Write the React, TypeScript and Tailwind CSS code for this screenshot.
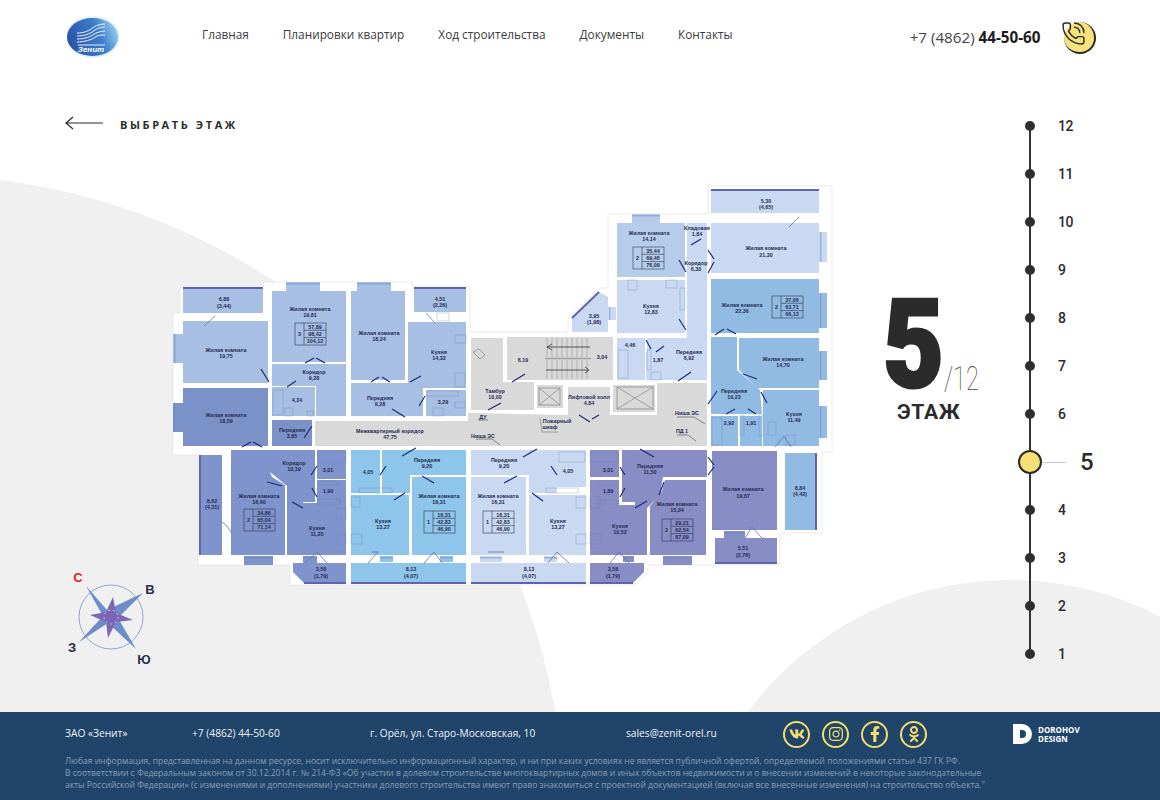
import { PhoneCall } from 'lucide-react';
import { FaVk, FaInstagram, FaFacebookF, FaOdnoklassniki } from 'react-icons/fa';

const TOP = '#a7bfe3';
const DEEP = '#7b92c8';
const LOW = '#7f94cc';
const SKY = '#8ec5ea';
const PALE = '#c9d9f1';
const MID = '#b5cdeb';
const PURPLE = '#898dc6';
const BLUE = '#92bbe4';
const GRAY = '#d9d9d9';

const rooms: [string, string][] = [
  // upper left flat
  [TOP, '183,288 263,288 263,313 183,313'],
  [TOP, '183,321 268,321 268,383 183,383'],
  [TOP, '272,291 346,291 346,362 272,362'],
  [TOP, '351,291 405,291 405,380 351,380'],
  [TOP, '408,322 466,322 466,388 408,388'],
  [TOP, '414,288 466,288 466,312 414,312'],
  [TOP, '272,364 346,364 346,416 316,416 316,386 272,386'],
  [TOP, '351,383 423,383 423,416 351,416'],
  [TOP, '272,387 315,387 315,416 272,416'],
  [TOP, '426,390 466,390 466,416 426,416'],
  // left flat
  [DEEP, '183,388 268,388 268,446 183,446'],
  [DEEP, '272,420 312,420 312,446 272,446'],
  // gray core
  [GRAY, '471,338 503,338 503,410 471,410'],
  [GRAY, '507,337 613,337 613,380 507,380'],
  [GRAY, '480,382 534,382 534,410 480,410'],
  [GRAY, '315,421 468,421 468,413 568,415 568,387 610,387 610,415 657,415 657,383 707,383 707,446 315,446'],
  [GRAY, '537,385 563,385 563,408 537,408'],
  [GRAY, '613,385 655,385 655,412 613,412'],
  // upper right flat
  [PALE, '711,189 819,189 819,213 711,213'],
  [PALE, '711,223 819,223 819,273 711,273'],
  [MID, '617,223 685,223 685,277 617,277'],
  [PALE, '687,223 707,223 707,380 647,380 647,338 687,338'],
  [PALE, '617,280 685,280 685,333 617,333'],
  [PALE, '572,318 599,292 608,297 608,332 572,332'],
  [PALE, '617,338 645,338 645,380 617,380'],
  [PALE, '646,352 669,352 669,380 646,380'],
  // right flat
  [BLUE, '711,279 819,279 819,333 711,333'],
  [BLUE, '711,337 737,337 737,370 760,390 762,414 711,414'],
  [BLUE, '739,338 819,338 819,388 757,388 739,370'],
  [BLUE, '763,390 819,390 819,446 763,446'],
  [BLUE, '711,416 738,416 738,446 711,446'],
  [BLUE, '740,416 762,416 762,446 740,446'],
  // lower left flat
  [LOW, '200,455 222,455 222,555 200,555'],
  [LOW, '231,472 270,472 272,477 285,485 285,555 231,555'],
  [LOW, '231,450 315,450 315,502 303,502 303,508 287,508 287,486 270,472 231,472'],
  [LOW, '287,503 346,503 346,555 287,555'],
  [LOW, '317,450 346,450 346,479 317,479'],
  [LOW, '317,480 346,480 346,505 317,505'],
  [LOW, '293,563 346,563 346,583 304,583 293,572'],
  // sky flat
  [SKY, '351,450 380,450 380,493 351,493'],
  [SKY, '382,450 466,450 466,475 410,475 410,493 382,493'],
  [SKY, '412,477 466,477 466,555 412,555'],
  [SKY, '351,495 409,495 409,555 351,555'],
  [SKY, '351,563 466,563 466,583 351,583'],
  // pale flat
  [PALE, '471,450 557,450 557,493 529,493 529,475 471,475'],
  [PALE, '471,477 526,477 526,555 471,555'],
  [PALE, '529,495 586,495 586,555 529,555'],
  [PALE, '557,450 586,450 586,487 557,487'],
  [PALE, '471,563 586,563 586,583 471,583'],
  // purple flat
  [PURPLE, '590,450 619,450 619,477 590,477'],
  [PURPLE, '590,480 619,480 619,505 590,505'],
  [PURPLE, '590,505 647,505 647,555 590,555'],
  [PURPLE, '622,450 707,450 707,477 663,477 660,495 647,508 635,508 635,502 622,502'],
  [PURPLE, '650,506 662,491 665,480 706,480 706,555 650,555'],
  [PURPLE, '712,451 777,451 777,530 712,530'],
  [PURPLE, '715,538 777,538 777,563 715,563'],
  [PURPLE, '590,563 644,563 644,572 633,583 590,583'],
  [BLUE, '785,453 816,453 816,530 785,530'],
];

const windows: [string, number, number, number, number][] = [
  [TOP, 286, 282, 34, 9],
  [TOP, 357, 282, 34, 9],
  [TOP, 173, 334, 10, 29],
  [DEEP, 173, 403, 10, 29],
  [MID, 632, 214, 28, 9],
  [PALE, 819, 232, 8, 30],
  [BLUE, 819, 293, 8, 35],
  [BLUE, 819, 351, 8, 29],
  [BLUE, 819, 406, 8, 32],
  [LOW, 244, 556, 29, 9],
  [LOW, 303, 556, 14, 7],
  [SKY, 380, 556, 13, 6],
  [SKY, 440, 556, 13, 6],
  [PALE, 480, 556, 22, 6],
  [PALE, 544, 556, 13, 6],
  [PURPLE, 623, 556, 11, 6],
  [PURPLE, 663, 556, 29, 9],
  [PURPLE, 724, 531, 21, 7],
  [PALE, 608, 307, 8, 13],
];

// rim on the outer edge of each balcony
const rims: [number, number, number, number][] = [
  [183, 288, 263, 288],
  [414, 288, 466, 288],
  [711, 190, 819, 190],
  [572, 318, 599, 292],
  [200, 455, 200, 555],
  [304, 583, 346, 583],
  [351, 583, 466, 583],
  [471, 583, 586, 583],
  [590, 583, 633, 583],
  [715, 563, 777, 563],
  [816, 453, 816, 530],
];

const doors: number[][] = [
  [261, 369, 269, 382], [305, 363, 314, 358], [316, 358, 325, 363], [287, 387, 296, 381],
  [371, 382, 379, 377], [382, 377, 390, 382], [410, 382, 421, 376], [419, 406, 425, 396],
  [392, 409, 405, 417], [242, 447, 251, 442], [253, 442, 262, 447], [304, 438, 312, 426],
  [488, 410, 501, 403], [512, 382, 525, 374], [579, 415, 590, 422], [592, 419, 599, 415],
  [679, 260, 686, 272], [691, 245, 701, 239], [708, 250, 714, 259], [714, 262, 708, 273],
  [679, 319, 686, 330], [646, 340, 651, 349], [656, 352, 664, 346], [678, 381, 691, 372],
  [715, 335, 724, 329], [727, 329, 736, 334], [743, 374, 757, 379], [761, 392, 767, 403],
  [708, 404, 717, 391], [726, 414, 735, 409], [748, 409, 756, 414], [402, 456, 416, 448],
  [311, 475, 317, 466], [267, 482, 282, 486], [312, 488, 317, 497], [292, 502, 303, 508],
  [380, 475, 386, 466], [422, 476, 434, 483], [394, 500, 405, 493], [523, 457, 537, 449],
  [504, 483, 517, 476], [532, 493, 543, 501], [551, 466, 557, 475], [620, 467, 625, 475],
  [625, 488, 620, 497], [635, 508, 647, 501], [640, 449, 654, 457], [664, 482, 659, 495],
  [708, 457, 714, 465], [714, 467, 708, 475],
];

// balcony doors, drawn lighter
const softDoors = [
  '204,326 215,316', '426,313 435,323', '789,227 799,217', '368,563 378,552 372,552',
  '424,563 434,552 442,563', '488,552 504,552', '305,563 317,552 327,563',
  '548,563 557,552 569,563', '610,563 619,552 629,563', '745,538 752,527 762,538',
  '222,522 226,525 232,533', '775,447 784,436 791,447',
];

const fixtures: number[][] = [
  [273, 390, 10, 25], [455, 335, 11, 8], [455, 373, 10, 14], [628, 280, 9, 10], [666, 280, 11, 8],
  [680, 288, 5, 22], [647, 350, 4, 20], [740, 415, 4, 20], [759, 415, 4, 21], [618, 350, 10, 28],
  [712, 418, 10, 27], [768, 422, 8, 13], [786, 435, 9, 10], [318, 452, 28, 10], [319, 481, 19, 4],
  [317, 499, 23, 6], [336, 508, 10, 11], [336, 534, 10, 10], [351, 534, 11, 10], [351, 497, 9, 10],
  [576, 497, 10, 11], [576, 534, 10, 10], [590, 534, 11, 10], [590, 497, 10, 11], [598, 481, 20, 4],
  [597, 500, 21, 4], [559, 452, 26, 10], [590, 452, 28, 10], [427, 391, 31, 5], [437, 313, 12, 8],
  [455, 402, 10, 6], [285, 408, 8, 8], [433, 408, 10, 8], [307, 411, 6, 5], [359, 488, 33, 5],
  [546, 488, 32, 5], [651, 372, 10, 8],
];

const labels: [number, number, string][] = [
  [224, 299, '6,88'], [224, 306, '(3,44)'], [310, 309, 'Жилая комната'], [310, 315, '19,81'],
  [379, 333, 'Жилая комната'], [379, 339, '18,24'], [440, 299, '4,51'], [440, 305, '(2,26)'],
  [439, 352, 'Кухня'], [439, 358, '14,32'], [314, 372, 'Коридор'], [314, 378, '9,28'],
  [297, 400, '4,34'], [380, 398, 'Передняя'], [380, 404, '9,28'], [443, 402, '3,29'],
  [226, 350, 'Жилая комната'], [226, 356, '19,75'], [226, 415, 'Жилая комната'], [226, 421, '18,59'],
  [292, 430, 'Передняя'], [292, 436, '3,85'], [390, 431, 'Межквартирный коридор'], [390, 437, '47,75'],
  [495, 391, 'Тамбур'], [495, 397, '10,00'], [523, 360, '6,19'], [602, 357, '3,04'],
  [589, 397, 'Лифтовой холл'], [589, 403, '4,84'], [557, 421, 'Пожарный'], [550, 427, 'шкаф'],
  [687, 413, 'Ниша ЭС'], [682, 431, 'ПД 1'], [483, 436, 'Ниша ЭС'], [483, 417, 'ДУ'],
  [594, 316, '3,95'], [594, 322, '(1,98)'], [649, 233, 'Жилая комната'], [649, 239, '14,14'],
  [697, 228, 'Кладовая'], [697, 234, '1,84'], [696, 263, 'Коридор'], [696, 269, '6,30'],
  [651, 306, 'Кухня'], [651, 312, '12,83'], [630, 345, '4,46'], [658, 360, '1,87'],
  [689, 352, 'Передняя'], [689, 358, '6,92'], [766, 201, '5,30'], [766, 207, '(4,65)'],
  [766, 248, 'Жилая комната'], [766, 255, '21,30'], [742, 305, 'Жилая комната'], [742, 311, '22,36'],
  [783, 359, 'Жилая комната'], [783, 365, '14,70'], [734, 391, 'Передняя'], [734, 397, '19,23'],
  [794, 414, 'Кухня'], [794, 420, '11,49'], [729, 423, '2,92'], [751, 423, '1,91'],
  [294, 463, 'Коридор'], [294, 469, '10,19'], [328, 470, '3,01'], [328, 491, '1,90'],
  [259, 496, 'Жилая комната'], [259, 502, '16,60'], [317, 528, 'Кухня'], [317, 534, '11,20'],
  [212, 501, '8,62'], [212, 507, '(4,31)'], [321, 569, '3,58'], [321, 576, '(1,79)'],
  [368, 472, '4,05'], [427, 460, 'Передняя'], [427, 466, '9,20'], [439, 496, 'Жилая комната'],
  [439, 502, '16,31'], [383, 521, 'Кухня'], [383, 527, '13,27'], [411, 569, '8,13'], [411, 576, '(4,07)'],
  [504, 460, 'Передняя'], [504, 466, '9,20'], [498, 496, 'Жилая комната'], [498, 502, '16,31'],
  [558, 521, 'Кухня'], [558, 527, '13,27'], [568, 471, '4,05'], [608, 470, '3,01'], [608, 491, '1,89'],
  [650, 466, 'Передняя'], [650, 472, '11,50'], [620, 526, 'Кухня'], [620, 532, '10,52'],
  [677, 504, 'Жилая комната'], [677, 510, '15,34'], [743, 489, 'Жилая комната'], [743, 496, '19,87'],
  [743, 548, '5,51'], [743, 555, '(2,76)'], [800, 488, '8,84'], [800, 494, '(4,42)'],
  [529, 569, '8,13'], [529, 576, '(4,07)'], [613, 569, '3,58'], [613, 576, '(1,79)'],
];

const tables: [number, number, string, string[]][] = [
  [295, 323, '3', ['57,89', '98,42', '104,12']],
  [633, 247, '2', ['35,44', '69,46', '76,09']],
  [772, 296, '2', ['37,06', '63,71', '66,13']],
  [244, 509, '2', ['34,86', '65,04', '71,14']],
  [424, 511, '1', ['16,31', '42,83', '46,90']],
  [483, 511, '1', ['16,31', '42,83', '46,90']],
  [662, 519, '2', ['29,21', '62,54', '67,09']],
];

const OUTLINE =
  '180,287 263,287 263,282 412,282 412,287 470,287 470,332 568,332 568,318 600,288 608,288 608,214 708,214 708,186 832,186 832,452 822,452 822,533 780,533 780,565 648,565 648,572 635,585 290,585 290,565 198,565 198,455 173,455 173,313 180,313';

function FloorPlan() {
  const steps = Array.from({ length: 9 }, (_, i) => 547 + i * 5);
  return (
    <svg
      viewBox="160 180 680 420"
      className="w-[680px] h-[420px] shrink-0 font-['Liberation_Sans',sans-serif]"
    >
      <polygon points={OUTLINE} fill="#ffffff" stroke="#e4e4e4" strokeWidth="0.8" />
      {windows.map(([c, x, y, w, h], i) => (
        <g key={i}>
          <rect x={x} y={y} width={w} height={h} fill={c} />
          {w > h ? (
            <rect x={x} y={y + 1} width={w} height={1.5} fill="#6f86bb" opacity="0.45" />
          ) : (
            <rect x={x + 1} y={y} width={1.5} height={h} fill="#6f86bb" opacity="0.45" />
          )}
        </g>
      ))}
      {rooms.map(([c, p], i) => (
        <polygon key={i} points={p} fill={c} />
      ))}
      {rims.map(([a, b, c, d], i) => (
        <line key={i} x1={a} y1={b} x2={c} y2={d} stroke="#5f62ad" strokeWidth="2" />
      ))}
      {fixtures.map(([x, y, w, h], i) => (
        <rect key={i} x={x} y={y} width={w} height={h} fill="none" stroke="#5d76ad" strokeWidth="0.5" opacity="0.6" />
      ))}

      {steps.map((x) => (
        <g key={x} stroke="#8b8b8b" strokeWidth="0.5">
          <line x1={x} y1={338} x2={x} y2={357} />
          <line x1={x} y1={360} x2={x} y2={379} />
        </g>
      ))}
      <line x1={545} y1={358.5} x2={591} y2={358.5} stroke="#a0a0a0" strokeWidth="1.5" />
      <path d="M548 347H590M552 344l-5 3 5 3M546 370H588M585 367l4 3-4 3" fill="none" stroke="#333333" strokeWidth="0.8" />
      <g fill="none" stroke="#777777" strokeWidth="0.6">
        <rect x="539" y="388" width="21" height="17" />
        <path d="M539 388l21 17M560 388l-21 17" />
        <rect x="617" y="387" width="36" height="22" />
        <path d="M617 387l36 22M653 387l-36 22" />
        <path d="M473 352l6-3 6 6-5 4-7-7z" />
        <path d="M540 418l2 14h16" />
        <path d="M677 417h17l11 7M677 435h11l8 6M476 439h16l8 6M478 420h10" stroke="#444444" />
      </g>

      {doors.map(([a, b, c, d], i) => (
        <line key={i} x1={a} y1={b} x2={c} y2={d} stroke="#1c2a78" strokeWidth="1.2" />
      ))}
      {softDoors.map((p, i) => (
        <polyline key={i} points={p} fill="none" stroke="#5e74a8" strokeWidth="0.8" />
      ))}

      {tables.map(([x, y, n, vals], i) => (
        <g key={i} fill="none" stroke="#30364f" strokeWidth="0.6">
          <rect x={x} y={y} width={31} height={22} />
          <line x1={x + 9} y1={y} x2={x + 9} y2={y + 22} />
          <line x1={x + 9} y1={y + 7.3} x2={x + 31} y2={y + 7.3} />
          <line x1={x + 9} y1={y + 14.6} x2={x + 31} y2={y + 14.6} />
          <text x={x + 4.5} y={y + 13} textAnchor="middle" fontSize="5.4" fontWeight="700" fill="#252a52" stroke="none">
            {n}
          </text>
          {vals.map((v, j) => (
            <text key={v} x={x + 20} y={y + 5.6 + j * 7.3} textAnchor="middle" fontSize="5.4" fontWeight="700" fill="#252a52" stroke="none">
              {v}
            </text>
          ))}
        </g>
      ))}
      {labels.map(([x, y, t], i) => (
        <text key={i} x={x} y={y + 2} textAnchor="middle" fontSize="5.4" fontWeight="700" fill="#252a52">
          {t}
        </text>
      ))}
    </svg>
  );
}

function Compass() {
  return (
    <svg viewBox="62 568 96 102" className="w-[96px] h-[102px] ml-[62px] mt-[388px] font-['Liberation_Sans',sans-serif]">
      <circle cx="111" cy="617" r="32" fill="none" stroke="#8ea6d2" strokeWidth="1" />
      <polygon points="86,586 107,610 143,593 118,618 136,649 108,623 79,642 103,616" fill="#6d8cca" />
      <polygon points="113,597 116,613 133,620 116,622 108,638 106,622 90,615 106,612" fill="#7c68b4" />
      <circle cx="111" cy="617" r="5" fill="#7d62b5" />
      <circle cx="111" cy="617" r="7" fill="none" stroke="#d6dcf0" strokeWidth="1" strokeDasharray="1.5 3.5" />
      <g fontSize="13" fontWeight="700" textAnchor="middle" fill="#2b2d4f">
        <text x="78" y="582" fill="#d9262c">С</text>
        <text x="150" y="594">В</text>
        <text x="72" y="652">З</text>
        <text x="144" y="664">Ю</text>
      </g>
    </svg>
  );
}

function Logo() {
  return (
    <svg viewBox="0 0 54 42" className="w-[54px] h-[42px] font-['Liberation_Sans',sans-serif]">
      <defs>
        <linearGradient id="lg" x1="0" x2="1" y1="0.5" y2="0.2">
          <stop offset="0" stopColor="#2a55a8" />
          <stop offset="0.6" stopColor="#3f7ecb" />
          <stop offset="1" stopColor="#9fd8f2" />
        </linearGradient>
      </defs>
      <ellipse cx="27" cy="21" rx="26.5" ry="20.5" fill="#d4ecf8" />
      <ellipse cx="26.5" cy="21" rx="25.5" ry="19" fill="url(#lg)" />
      <path d="M11 17c7 0 12-2 17-6 3-2 7-3 11-3M11 20c7 0 13-2 18-6 3-2 7-3 10-3M11 23c7 0 14-2 19-6 3-1 6-2 9-2M11 26c7 0 15-2 20-6 3-1 5-1 8-1M12 29h27" fill="none" stroke="#ffffff" strokeWidth="1" opacity="0.9" />
      <text x="25" y="35.5" textAnchor="middle" fontSize="8" fontWeight="700" fontStyle="italic" fill="#ffffff">Зенит</text>
    </svg>
  );
}

function Header() {
  const nav = ['Главная', 'Планировки квартир', 'Ход строительства', 'Документы', 'Контакты'];
  return (
    <header className="flex h-[72px] pl-[66px] font-['Open_Sans',sans-serif]">
      <a href="#" className="mt-[16px] w-[54px]">
        <Logo />
      </a>
      <nav className="ml-[82px] mt-[25px] flex gap-[34px] text-[11.8px] leading-[18px] text-[#3c3c3c]">
        {nav.map((n) => (
          <a key={n} href="#">{n}</a>
        ))}
      </nav>
      <div className="ml-[177px] mt-[27px] text-[15.2px] leading-[20px] text-[#444444] whitespace-nowrap">
        +7 (4862) <b className="font-bold text-[#1c1c1c]">44-50-60</b>
      </div>
      <div className="relative ml-[24px] mt-[22px] h-[32px] w-[32px] rounded-full bg-[#f8e27c] border-r-2 border-b-2 border-[#2b2b2b]">
        <PhoneCall size={25} strokeWidth={1.4} className="absolute -left-[3px] -top-[1px] text-[#2b2b2b]" />
      </div>
    </header>
  );
}

function FloorRail() {
  const floors = [12, 11, 10, 9, 8, 7, 6, 5, 4, 3, 2, 1];
  return (
    <div className="relative mt-[30px] h-[576px] w-[90px] font-['Roboto',sans-serif]">
      <div className="absolute left-[11px] top-[24px] bottom-[24px] w-[2px] bg-[#333333]" />
      {floors.map((f) =>
        f === 5 ? (
          <div key={f} className="relative flex h-[48px] items-center">
            <span className="h-[24px] w-[24px] rounded-full border-2 border-[#2b2b2b] bg-[#f6df74]" />
            <span className="h-px w-[24px] bg-[#c9c9c9]" />
            <span className="ml-[14px] text-[24px] font-medium text-[#2b2b2b]">{f}</span>
          </div>
        ) : (
          <div key={f} className="relative flex h-[48px] items-center">
            <span className="ml-[7px] h-[10px] w-[10px] rounded-full bg-[#2f2f2f]" />
            <span className="ml-[23px] text-[14px] font-medium tracking-[-0.04em] text-[#2b2b2b]">{f}</span>
          </div>
        ),
      )}
    </div>
  );
}

function SocialIcons() {
  const icons = [FaVk, FaInstagram, FaFacebookF, FaOdnoklassniki];
  return (
    <div className="flex gap-[12px] text-[#f3dd6c]">
      {icons.map((Icon, i) => (
        <a key={i} href="#" className="flex h-[27px] w-[27px] items-center justify-center rounded-full border-2 border-[#f3dd6c]">
          <Icon size={16} />
        </a>
      ))}
    </div>
  );
}

function Footer() {
  return (
    <footer className="h-[88px] bg-[#20446a] pl-[65px] pt-[9px] font-['Open_Sans',sans-serif]">
      <div className="flex h-[26px] items-center text-[10.2px] text-[#eef2f6]">
        <span className="w-[127px]">ЗАО «Зенит»</span>
        <span className="w-[178px]">+7 (4862) 44-50-60</span>
        <span className="w-[256px]">г. Орёл, ул. Старо-Московская, 10</span>
        <span className="w-[157px]">sales@zenit-orel.ru</span>
        <SocialIcons />
        <div className="ml-[86px] flex items-center gap-[5px]">
          <svg viewBox="0 0 20 20" className="h-[20px] w-[20px]">
            <path fillRule="evenodd" d="M0 0h9a10 10 0 0 1 0 20H0zM7 6v8h2a4 4 0 0 0 0-8z" fill="#ffffff" />
          </svg>
          <span className="text-[8px] font-bold leading-[9px] text-white">
            DOROHOV<br />DESIGN
          </span>
        </div>
      </div>
      <p className="mt-[8px] whitespace-nowrap text-[8.5px] leading-[12px] text-[#8b9fb5]">
        Любая информация, представленная на данном ресурсе, носит исключительно информационный характер, и ни при каких условиях не является публичной офертой, определяемой положениями статьи 437 ГК РФ.
        <br />
        В соответствии с Федеральным законом от 30.12.2014 г. № 214-ФЗ «Об участии в долевом строительстве многоквартирных домов и иных объектов недвижимости и о внесении изменений в некоторые законодательные
        <br />
        акты Российской Федерации» (с изменениями и дополнениями) участники долевого строительства имеют право знакомиться с проектной документацией (включая все внесенные изменения) на строительство объекта."
      </p>
    </footer>
  );
}

export default function App() {
  return (
    <div className="w-[1160px] bg-white">
      <main className="relative h-[712px] overflow-hidden">
        {/* background blobs */}
        <div className="absolute left-[-724px] top-[175px] h-[1288px] w-[1288px] rounded-full bg-[#f0f0f0]" />
        <div className="absolute left-[684px] top-[580px] h-[652px] w-[652px] rounded-full bg-[#f0f0f0]" />

        <div className="relative">
          <Header />
          <div className="flex">
            <div className="w-[840px]">
              <a href="#" className="ml-[65px] flex h-[108px] items-start pt-[44px] font-['Open_Sans',sans-serif]">
                <svg viewBox="0 0 38 14" className="h-[14px] w-[38px]">
                  <path d="M38 7H1M8 1L1 7l7 6" fill="none" stroke="#2b2b2b" strokeWidth="1.2" />
                </svg>
                <span className="ml-[17px] text-[11px] font-bold leading-[18px] tracking-[0.235em] text-[#2b2b2b]">
                  ВЫБРАТЬ ЭТАЖ
                </span>
              </a>
              <div className="flex">
                <div className="w-[160px]">
                  <Compass />
                </div>
                <FloorPlan />
              </div>
            </div>
            <div className="w-[178px] pl-[43px] pt-[228px] font-['Roboto',sans-serif] text-[#2b2b2b]">
              <div className="flex h-[92px] items-end">
                <span className="inline-block w-[61px] origin-left scale-x-[0.86] text-[122px] font-black leading-[92px] [-webkit-text-stroke:3px_#2b2b2b]">5</span>
                <span className="-mb-[5px] inline-block origin-left scale-x-[0.72] text-[33px] font-thin leading-[36px] text-[#444444]">/12</span>
              </div>
              <div className="ml-[14px] mt-[7px] text-[21px] font-bold leading-[26px] tracking-[0.04em]">ЭТАЖ</div>
            </div>
            <FloorRail />
          </div>
        </div>
      </main>
      <Footer />
    </div>
  );
}
